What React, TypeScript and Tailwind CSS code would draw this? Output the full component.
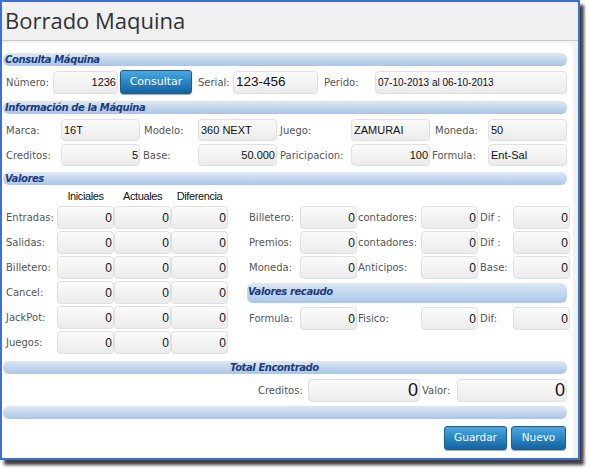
import type { ReactNode } from "react";

const label =
  "shrink-0 font-['DejaVu_Sans',Verdana,sans-serif] text-[10px] text-[#555] whitespace-nowrap";
const btn =
  "shrink-0 rounded-[3px] border border-[#1b5f91] bg-linear-to-b from-[#4ba7df] via-[#2a86c6] to-[#15639d] text-white font-['DejaVu_Sans',Verdana,sans-serif] text-[10.5px] flex items-center justify-center shadow-[0_1px_1px_rgba(0,0,0,0.35)]";

function Field({
  w,
  value,
  left = false,
  size = "text-[11px]",
  h = "h-[23px]",
}: {
  w: string;
  value: ReactNode;
  left?: boolean;
  size?: string;
  h?: string;
}) {
  return (
    <div
      className={`${w} ${h} shrink-0 rounded-[4px] border border-[#e0e0e0] bg-linear-to-b from-[#fbfbfb] to-[#ebebeb] flex items-center font-['Liberation_Sans',Arial,sans-serif] text-[#111] whitespace-nowrap ${size} ${
        left ? "justify-start pl-[2px]" : "justify-end pr-[1px]"
      }`}
    >
      {value}
    </div>
  );
}

function Label({ w, text, pad = "pl-[3px]" }: { w: string; text: string; pad?: string }) {
  return <span className={`${label} ${w} ${pad}`}>{text}</span>;
}

function Bar({ title, className = "" }: { title?: string; className?: string }) {
  return (
    <div
      className={`h-[13px] rounded-[6px] bg-linear-to-b from-[#dce8f6] to-[#abc5e7] flex items-center font-['DejaVu_Sans',Verdana,sans-serif] text-[10px] font-bold italic tracking-[-0.4px] text-[#1b3b7c] leading-none whitespace-nowrap ${className}`}
    >
      {title}
    </div>
  );
}

const grid = [
  { name: "Entradas:", vals: ["0", "0", "0"] },
  { name: "Salidas:", vals: ["0", "0", "0"] },
  { name: "Billetero:", vals: ["0", "0", "0"] },
  { name: "Cancel:", vals: ["0", "0", "0"] },
  { name: "JackPot:", vals: ["0", "0", "0"] },
  { name: "Juegos:", vals: ["0", "0", "0"] },
];

const cuadre = [
  ["Billetero:", "contadores:", "Dif :"],
  ["Premios:", "contadores:", "Dif :"],
  ["Moneda:", "Anticipos:", "Base:"],
];

function CuadreRow({ names }: { names: string[] }) {
  return (
    <div className="flex items-center h-[23px]">
      <Label w="w-[53px]" text={names[0]} pad="pl-[2px]" />
      <Field w="w-[57px]" value="0" size="text-[12px]" />
      <Label w="w-[64px]" text={names[1]} pad="pl-[1px]" />
      <Field w="w-[57px]" value="0" size="text-[12px]" />
      <Label w="w-[35px]" text={names[2]} pad="pl-[2px]" />
      <Field w="w-[57px]" value="0" size="text-[12px]" />
    </div>
  );
}

export default function App() {
  return (
    <div className="w-[589px] h-[470px] bg-white">
      <div className="w-[580px] h-[460px] border-2 border-[#3d6fdc] bg-[#f2f2f2] shadow-[4px_5px_3px_rgba(0,0,0,0.75)] flex flex-col">
        {/* title strip */}
        <div className="h-[39px] shrink-0 border-b border-[#c9c9c9] bg-[#f0f0f0] flex items-center pl-[3px] pb-[2px]">
          <h1 className="font-['Open_Sans',sans-serif] text-[22px] text-[#333] leading-none">
            Borrado Maquina
          </h1>
        </div>

        <div className="flex-1 mt-[2px] mr-[5px] bg-white rounded-tr-[5px] pl-[1px] pt-[10px]">
          {/* Consulta */}
          <Bar title="Consulta Máquina" className="w-[564px] pl-[2px]" />
          <div className="mt-[4px] h-[24px] flex items-center">
            <Label w="w-[50px]" text="Número:" />
            <Field w="w-[65px]" value="1236" size="text-[11px]" />
            <button className={`${btn} ml-[2px] w-[72px] h-[24px] text-[11px]`}>Consultar</button>
            <Label w="w-[41px]" text="Serial:" pad="pl-[6px]" />
            <Field w="w-[85px]" value="123-456" left size="text-[13.5px]" />
            <Label w="w-[57px]" text="Perido:" pad="pl-[6px]" />
            <Field w="w-[192px]" value="07-10-2013 al 06-10-2013" left size="text-[10px]" />
          </div>

          {/* Información */}
          <Bar title="Información de la Máquina" className="mt-[7px] w-[564px] pl-[2px]" />
          <div className="mt-[5px] flex flex-col gap-[3px]">
            <div className="flex items-center h-[22px]">
              <Label w="w-[58px]" text="Marca:" />
              <Field w="w-[79px]" h="h-[22px]" value="16T" left />
              <Label w="w-[58px]" text="Modelo:" pad="pl-[4px]" />
              <Field w="w-[79px]" h="h-[22px]" value="360 NEXT" left />
              <Label w="w-[74px]" text="Juego:" />
              <Field w="w-[79px]" h="h-[22px]" value="ZAMURAI" left />
              <Label w="w-[58px]" text="Moneda:" pad="pl-[5px]" />
              <Field w="w-[79px]" h="h-[22px]" value="50" left />
            </div>
            <div className="flex items-center h-[22px]">
              <Label w="w-[58px]" text="Creditos:" />
              <Field w="w-[79px]" h="h-[22px]" value="5" />
              <Label w="w-[58px]" text="Base:" />
              <Field w="w-[79px]" h="h-[22px]" value="50.000" />
              <Label w="w-[74px]" text="Paricipacion:" />
              <Field w="w-[79px]" h="h-[22px]" value="100" />
              <Label w="w-[58px]" text="Formula:" pad="pl-[2px]" />
              <Field w="w-[79px]" h="h-[22px]" value="Ent-Sal" left />
            </div>
          </div>

          {/* Valores */}
          <Bar title="Valores" className="mt-[6px] w-[564px] pl-[2px]" />
          <div className="flex">
            <div className="w-[225px] shrink-0">
              <div className="h-[21px] flex items-center pt-[2px] pl-[54px] font-['Liberation_Sans',Arial,sans-serif] text-[11px] tracking-[-0.4px] text-[#111]">
                <span className="w-[57px] text-center">Iniciales</span>
                <span className="w-[57px] text-center">Actuales</span>
                <span className="w-[57px] text-center">Diferencia</span>
              </div>
              <div className="flex flex-col gap-[2px]">
                {grid.map((row) => (
                  <div key={row.name} className="flex items-center h-[23px]">
                    <Label w="w-[54px]" text={row.name} />
                    {row.vals.map((v, i) => (
                      <Field key={i} w="w-[57px]" value={v} size="text-[12px]" />
                    ))}
                  </div>
                ))}
              </div>
            </div>

            <div className="ml-[19px] pt-[21px]">
              <div className="flex flex-col gap-[2px]">
                {cuadre.map((names, i) => (
                  <CuadreRow key={i} names={names} />
                ))}
              </div>
              <Bar title="Valores recaudo" className="mt-[4px] h-[20px] w-[320px] pl-[1px] pb-[3px] rounded-[5px]" />
              <div className="mt-[4px] flex items-center h-[23px]">
                <Label w="w-[53px]" text="Formula:" pad="pl-[2px]" />
                <Field w="w-[57px]" value="0" size="text-[12px]" />
                <Label w="w-[64px]" text="Fisico:" pad="pl-[1px]" />
                <Field w="w-[57px]" value="0" size="text-[12px]" />
                <Label w="w-[35px]" text="Dif:" pad="pl-[2px]" />
                <Field w="w-[57px]" value="0" size="text-[12px]" />
              </div>
            </div>
          </div>

          {/* Totales */}
          <Bar title="Total Encontrado" className="mt-[7px] w-[564px] pl-[227px]" />
          <div className="mt-[5px] flex items-center h-[23px] pl-[252px]">
            <Label w="w-[53px]" text="Creditos:" />
            <Field w="w-[112px]" value="0" size="text-[18px]" />
            <Label w="w-[37px]" text="Valor:" pad="pl-[2px]" />
            <Field w="w-[110px]" value="0" size="text-[18px]" />
          </div>
          <Bar className="mt-[4px] w-[564px]" />

          <div className="mt-[7px] w-[563px] flex justify-end gap-[4px]">
            <button className={`${btn} w-[63px] h-[24px]`}>Guardar</button>
            <button className={`${btn} w-[55px] h-[24px]`}>Nuevo</button>
          </div>
        </div>
      </div>
    </div>
  );
}
